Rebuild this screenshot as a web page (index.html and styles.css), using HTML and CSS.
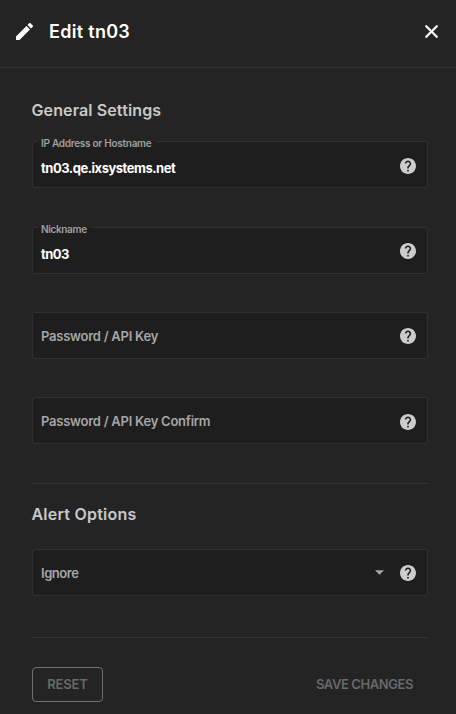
FILE: index.html
```html
<!DOCTYPE html>
<html lang="en">
<head>
<meta charset="utf-8">
<title>Edit tn03</title>
<link rel="stylesheet" href="styles.css">
</head>
<body>
<svg class="sprite" aria-hidden="true">
  <symbol id="help" viewBox="2 2 20 20"><path fill-rule="evenodd" d="M12 2C6.48 2 2 6.48 2 12s4.480 10 10 10 10-4.480 10-10S17.520 2 12 2zm1 17h-2v-2h2v2zm2.070-7.750l-.9.920C13.450 12.900 13 13.500 13 15h-2v-.5c0-1.100.45-2.100 1.170-2.830l1.240-1.260c.37-.36.59-.86.59-1.410 0-1.100-.9-2-2-2s-2 .9-2 2H8c0-2.210 1.790-4 4-4s4 1.790 4 4c0 .88-.36 1.680-.93 2.250z"/></symbol>
</svg>
<form class="panel">
  <header class="header">
    <svg class="pencil" viewBox="3 3 18 18"><path d="M3 17.250V21h3.750L17.810 9.940l-3.750-3.750L3 17.250zM20.710 7.040a1 1 0 0 0 0-1.410l-2.340-2.340a1 1 0 0 0-1.410 0l-1.830 1.830 3.750 3.750 1.830-1.830z"/></svg>
    <h1 class="title">Edit tn03</h1>
    <svg class="close" viewBox="5 5 14 14"><path d="M19 6.410L17.590 5 12 10.590 6.410 5 5 6.410 10.590 12 5 17.590 6.410 19 12 13.410 17.590 19 19 17.590 13.410 12z"/></svg>
  </header>
  <main class="content">
    <section class="general">
      <h2 class="heading"><span class="general-text">General Settings</span></h2>
      <div class="field filled">
        <label class="label host-label">IP Address or Hostname</label>
        <span class="value host-value">tn03.qe.ixsystems.net</span>
        <svg class="help"><use href="#help"/></svg>
      </div>
      <div class="field filled nickname">
        <label class="label nick-label">Nickname</label>
        <span class="value nick-value">tn03</span>
        <svg class="help"><use href="#help"/></svg>
      </div>
      <div class="field">
        <span class="placeholder key-text">Password / API Key</span>
        <svg class="help"><use href="#help"/></svg>
      </div>
      <div class="field confirm">
        <span class="placeholder confirm-text">Password / API Key Confirm</span>
        <svg class="help"><use href="#help"/></svg>
      </div>
    </section>
    <section class="alerts">
      <h2 class="heading"><span class="alert-text">Alert Options</span></h2>
      <div class="field">
        <span class="placeholder ignore-text">Ignore</span>
        <svg class="arrow" viewBox="0 0 10 5"><path d="M0 0h10L5 5z"/></svg>
        <svg class="help"><use href="#help"/></svg>
      </div>
    </section>
    <footer class="actions">
      <button type="button" class="button reset"><span class="reset-text">RESET</span></button>
      <button type="button" class="button save"><span class="save-text">SAVE CHANGES</span></button>
    </footer>
  </main>
</form>
</body>
</html>
```
FILE: styles.css
```css
* { box-sizing: border-box; }
body {
  margin: 0;
  background: #242424;
  color: #fff;
  font-family: Inter, "Liberation Sans", sans-serif;
  font-weight: 500;
}
.sprite { display: none; }
.panel { height: 714px; overflow: hidden; }
.header {
  display: flex;
  align-items: center;
  height: 68px;
  padding: 0 18px 4px 16px;
  border-bottom: 1px solid #353535;
}
.pencil { width: 17px; height: 17px; fill: #fff; }
.title {
  margin: 0 auto 0 16px;
  padding-top: 1px;
  font-size: 18px;
  line-height: 24px;
  font-weight: 600;
  letter-spacing: 0.3px;
}
.close { width: 13px; height: 13px; fill: #fff; stroke: #fff; stroke-width: 0.5px; }
.content { padding: 31px 28px 0 32px; }
.general { height: 385px; border-bottom: 1px solid #353535; }
.alerts { height: 154px; padding-top: 19px; border-bottom: 1px solid #353535; }
.heading {
  height: 24px;
  margin: 0 0 18px -0.5px;
  font-size: 16px;
  line-height: 23px;
  font-weight: 600;
  color: #c9c9c9;
}
.general-text { letter-spacing: 0.12px; }
.alert-text { letter-spacing: 0.22px; }
.alerts .heading { margin-bottom: 22px; }
.field {
  position: relative;
  display: flex;
  align-items: center;
  height: 47px;
  margin-bottom: 38px;
  padding: 0 11px 0 8px;
  background: #1e1e1e;
  border: 1px solid #303030;
  border-radius: 2px;
}
.general .field:first-of-type { margin-bottom: 39px; }
.label {
  position: absolute;
  left: 5px;
  top: -6px;
  height: 14px;
  padding: 0 4px 0 3px;
  font-size: 10px;
  line-height: 14px;
  font-weight: 600;
  color: #a0a0a0;
  white-space: nowrap;
}
.host-label { letter-spacing: -0.27px; }
.nick-label { letter-spacing: -0.35px; }
.label::before {
  content: "";
  position: absolute;
  z-index: -1;
  inset: 5px 0 8px;
  background: #1e1e1e;
}
.filled { z-index: 0; }
.value, .placeholder {
  flex: 1;
  font-size: 13px;
  line-height: 18px;
  white-space: nowrap;
}
.value { padding-top: 7px; font-weight: 700; }
.host-value { letter-spacing: -0.48px; }
.nick-value { letter-spacing: -0.55px; }
.placeholder { color: #a6a6a6; font-weight: 600; letter-spacing: -0.25px; }
.ignore-text { letter-spacing: -0.45px; }
.help {
  width: 16px;
  height: 16px;
  margin-top: 3px;
  fill: #ccc;
}
.nickname .help { margin-top: 1px; }
.field .placeholder ~ .help { margin-top: 1px; }
.confirm .placeholder ~ .help { margin-top: 3px; }
.arrow { width: 9px; height: 5px; margin-right: 16px; fill: #a6a6a6; }
.actions {
  display: flex;
  justify-content: space-between;
  padding-top: 29px;
}
.button {
  height: 35px;
  padding: 0 14px;
  border: 1px solid transparent;
  border-radius: 4px;
  background: none;
  color: #696969;
  font: 600 13px/33px Inter, "Liberation Sans", sans-serif;
}
.reset { width: 71px; border-color: #707070; }
.reset-text { letter-spacing: -0.15px; }
.save { white-space: nowrap; }
.save-text { letter-spacing: -0.42px; }
```
